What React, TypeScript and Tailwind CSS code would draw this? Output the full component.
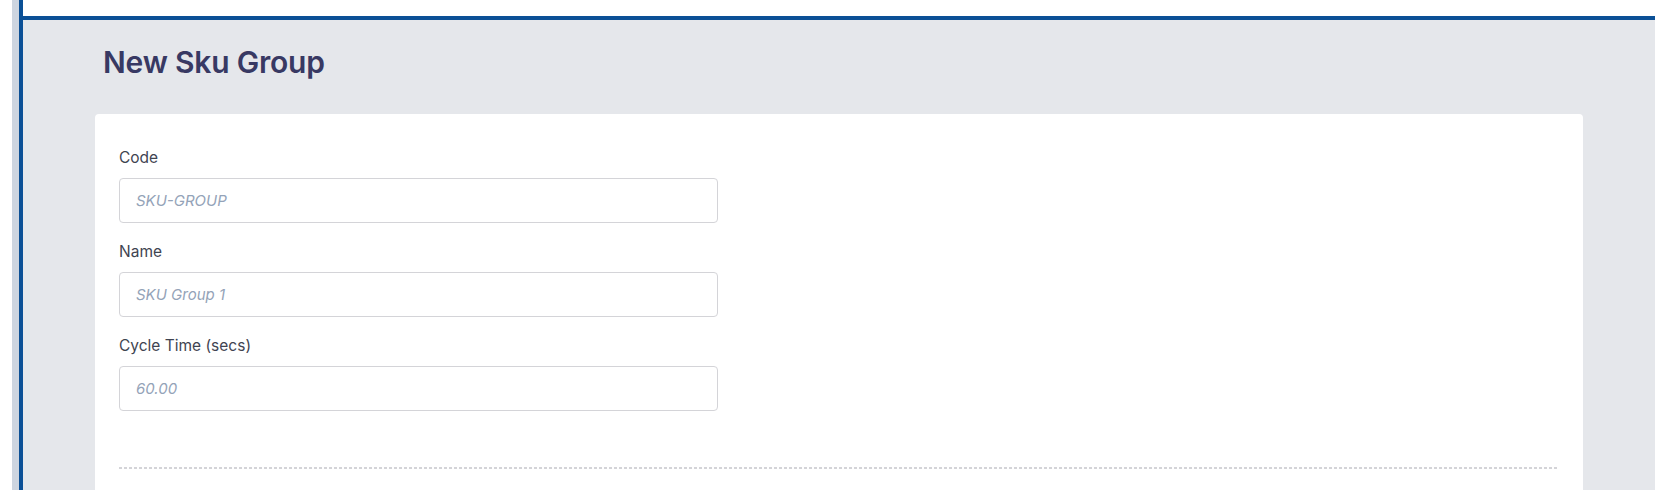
const fields = [
  { label: "Code", placeholder: "SKU-GROUP" },
  { label: "Name", placeholder: "SKU Group 1" },
  { label: "Cycle Time (secs)", placeholder: "60.00" },
];

export default function App() {
  return (
    <div
      className="flex h-[490px] w-full overflow-hidden bg-white"
      style={{ fontFamily: "Inter, 'Noto Sans', sans-serif" }}
    >
      <div className="w-[12px] shrink-0 bg-white" />
      <div className="w-[7px] shrink-0 bg-[#cdd5e0]" />
      <div className="flex min-w-0 flex-1 flex-col border-l-4 border-[#0b5096]">
        <div className="h-[20px] shrink-0 border-b-4 border-[#0b5096] bg-white" />
        <main className="flex-1 bg-[#e5e7eb] px-[72px]">
          <h1 className="mt-[22px] pl-[8px] text-[30px] leading-[40px] font-semibold tracking-[-0.2px] text-[#383963]">
            New Sku Group
          </h1>
          <div className="mt-[32px] rounded-[4px] bg-white px-[24px] pt-[32px] pb-[40px]">
            <div className="flex flex-col gap-[17px]">
              {fields.map((f) => (
                <div key={f.label} className="flex flex-col">
                  <label className="mb-[8px] text-[15.5px] leading-[24px] text-[#3f4451]">
                    {f.label}
                  </label>
                  <input
                    className="h-[45px] w-[599px] rounded-[4px] border border-[#d4d4d8] bg-white px-[16px] text-[15px] italic text-[#374151] outline-none placeholder:text-[#94a3b8]"
                    placeholder={f.placeholder}
                  />
                </div>
              ))}
            </div>
            <div className="mt-[56px] h-[2px] bg-[repeating-linear-gradient(to_right,#d4d4d8_0_3px,transparent_3px_5px)]" />
          </div>
        </main>
      </div>
    </div>
  );
}
